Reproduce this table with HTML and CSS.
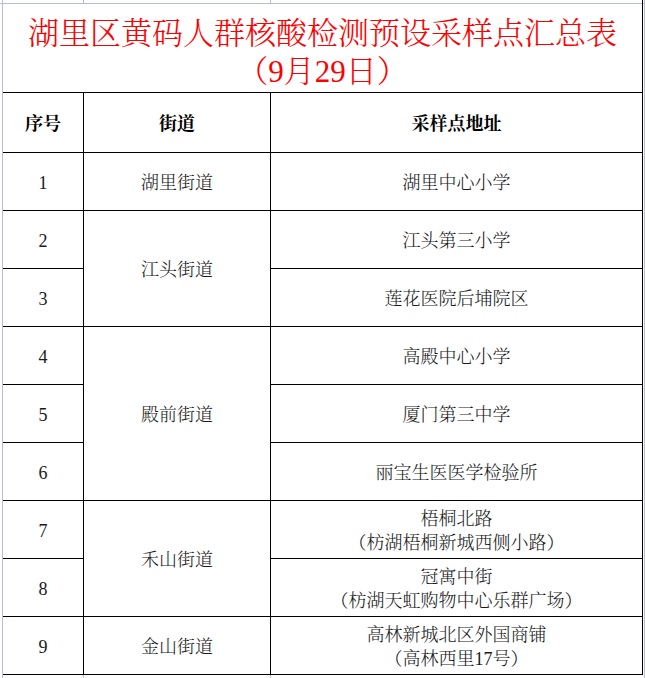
FILE: index.html
```html
<!DOCTYPE html>
<html lang="zh-CN">
<head>
<meta charset="utf-8">
<title>湖里区黄码人群核酸检测预设采样点汇总表</title>
<link rel="stylesheet" href="styles.css">
</head>
<body>
<div class="sheet">
  <div class="cell title"><span>湖里区黄码人群核酸检测预设采样点汇总表</span><span>（9月29日）</span></div>

  <div class="cell head first">序号</div>
  <div class="cell head">街道</div>
  <div class="cell head">采样点地址</div>

  <div class="cell num r1">1</div>
  <div class="cell street r1 s1">湖里街道</div>
  <div class="cell addr r1">湖里中心小学</div>

  <div class="cell num r2">2</div>
  <div class="cell street r2 s2">江头街道</div>
  <div class="cell addr r2">江头第三小学</div>

  <div class="cell num r3">3</div>
  <div class="cell addr r3">莲花医院后埔院区</div>

  <div class="cell num r4">4</div>
  <div class="cell street r4 s3">殿前街道</div>
  <div class="cell addr r4">高殿中心小学</div>

  <div class="cell num r5">5</div>
  <div class="cell addr r5">厦门第三中学</div>

  <div class="cell num r6">6</div>
  <div class="cell addr r6">丽宝生医医学检验所</div>

  <div class="cell num r7">7</div>
  <div class="cell street r7 s2">禾山街道</div>
  <div class="cell addr two r7"><span>梧桐北路</span><span>（枋湖梧桐新城西侧小路）</span></div>

  <div class="cell num r8">8</div>
  <div class="cell addr two r8"><span>冠寓中街</span><span>（枋湖天虹购物中心乐群广场）</span></div>

  <div class="cell num r9">9</div>
  <div class="cell street r9 s1">金山街道</div>
  <div class="cell addr two r9"><span>高林新城北区外国商铺</span><span>（高林西里17号）</span></div>
</div>
</body>
</html>
```

FILE: styles.css
```css
html, body {
  margin: 0;
  padding: 0;
  height: 100%;
}

body {
  font-family: "Liberation Serif", "Noto Serif CJK SC", "Noto Sans CJK SC", serif;
  color: #1a1a1a;
  background:
    linear-gradient(#000, #000) 642px 0 / 1px 4px no-repeat,
    linear-gradient(#b6bed3, #b6bed3) 2px 0 / 1px 100% no-repeat,
    linear-gradient(#b6bed3, #b6bed3) 0 3px / 100% 1px no-repeat,
    linear-gradient(#b6bed3, #b6bed3) 83px 0 / 1px 100% no-repeat,
    linear-gradient(#b6bed3, #b6bed3) 270px 0 / 1px 100% no-repeat,
    linear-gradient(#b6bed3, #b6bed3) 644px 0 / 1px 100% no-repeat,
    #fff;
  overflow: hidden;
}

.sheet {
  display: grid;
  grid-template-columns: 81px 187px 372px;
  grid-template-rows: 89px 60px repeat(9, 58px);
  width: 640px;
  margin: 4px 0 0 3px;
  background: #fff;
}

.cell {
  box-sizing: border-box;
  border-right: 1px solid #000;
  border-bottom: 1px solid #000;
  display: flex;
  align-items: center;
  justify-content: center;
  text-align: center;
  font-size: 18px;
  line-height: 24px;
  font-weight: 300;
  padding-top: 3px;
}

.title {
  grid-column: 1 / 4;
  flex-direction: column;
  color: #ff0000;
  font-size: 31px;
  line-height: 38px;
  padding-top: 9px;
  white-space: nowrap;
}

.head {
  font-weight: bold;
  font-size: 18px;
  color: #000;
}

.num { grid-column: 1; }
.street { grid-column: 2; }
.addr { grid-column: 3; }

.two { flex-direction: column; }

.r1 { grid-row: 3; }
.r2 { grid-row: 4; }
.r3 { grid-row: 5; }
.r4 { grid-row: 6; }
.r5 { grid-row: 7; }
.r6 { grid-row: 8; }
.r7 { grid-row: 9; }
.r8 { grid-row: 10; }
.r9 { grid-row: 11; }

.street.s1 { grid-row-end: span 1; }
.street.s2 { grid-row-end: span 2; }
.street.s3 { grid-row-end: span 3; }
```
